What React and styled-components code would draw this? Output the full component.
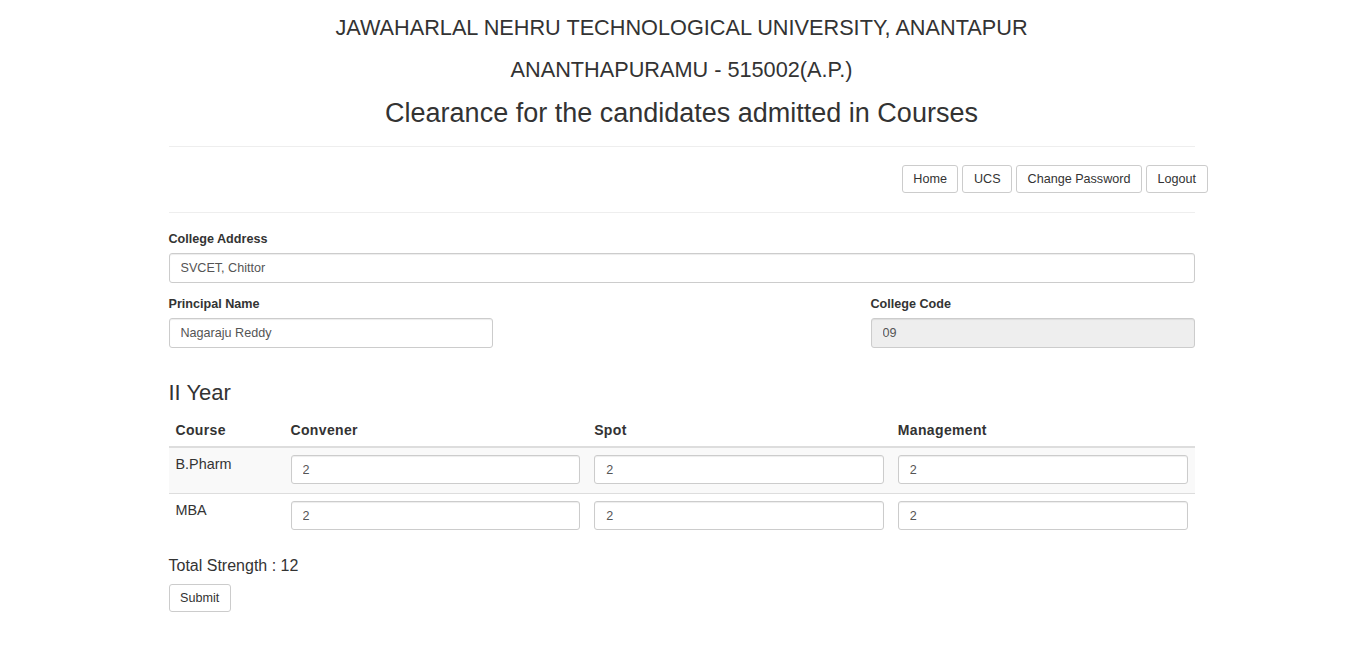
import styled, { createGlobalStyle } from 'styled-components'

const Global = createGlobalStyle`
  body {
    margin: 0;
    background: #fff;
    color: #333;
    font-family: "Liberation Sans", Arial, sans-serif;
    font-size: 12.6px;
  }
  * { box-sizing: border-box; }
`

const Page = styled.div`
  width: 1026px;
  margin: 0 auto;
  padding-top: 15px;
`

const Title = styled.h1`
  margin: ${(p) => p.$mt || 0}px 0 0;
  text-align: center;
  font-weight: 400;
  font-size: ${(p) => p.$size}px;
  line-height: ${(p) => p.$lh}px;
`

const Rule = styled.hr`
  margin: ${(p) => p.$mt}px 0 0;
  border: 0;
  border-top: 1px solid #eee;
`

const Nav = styled.div`
  display: flex;
  justify-content: flex-end;
  gap: 4px;
  margin: 18px -13px 0 0;
`

const Button = styled.button`
  height: 28px;
  padding: 0 10.5px;
  background: #fff;
  border: 1px solid #ccc;
  border-radius: 3px;
  color: #333;
  font-family: inherit;
  font-size: 12.6px;
  cursor: pointer;
`

const Field = styled.div`
  margin-top: ${(p) => p.$mt}px;
`

const Label = styled.label`
  display: block;
  font-weight: 700;
  font-size: 12.6px;
  line-height: 18px;
  margin-bottom: 5px;
`

const Input = styled.input`
  display: block;
  width: 100%;
  height: ${(p) => p.$h || 30}px;
  padding: 0 11px;
  border: 1px solid #ccc;
  border-radius: 3px;
  box-shadow: inset 0 1px 1px rgba(0, 0, 0, 0.075);
  background: ${(p) => (p.disabled ? '#eee' : '#fff')};
  color: #555;
  font-family: inherit;
  font-size: 12.6px;
`

const Row = styled.div`
  display: grid;
  grid-template-columns: 324px 1fr 324px;
  margin-top: 12px;
`

const Section = styled.h3`
  margin: 33px 0 0;
  font-weight: 400;
  font-size: 22px;
  line-height: 24px;
`

const Table = styled.table`
  width: 100%;
  margin-top: 9px;
  border-collapse: collapse;
  table-layout: fixed;
`

const Th = styled.th`
  width: ${(p) => p.$w || 'auto'};
  padding: 7px;
  text-align: left;
  font-size: 14px;
  letter-spacing: 0.35px;
  line-height: 18px;
  font-weight: 700;
  border-bottom: 2px solid #ddd;
`

const Tr = styled.tr`
  background: ${(p) => (p.$striped ? '#f9f9f9' : '#fff')};
`

const Td = styled.td`
  padding: 7px 7px 9px;
  vertical-align: top;
  font-size: 14.4px;
  line-height: 18px;
  border-top: 1px solid #ddd;
`

const Total = styled.div`
  margin-top: 17px;
  font-size: 16px;
  line-height: 20px;
`

const Footer = styled.div`
  margin-top: 8px;
`

const courses = ['B.Pharm', 'MBA']

export default function App() {
  return (
    <>
      <Global />
      <Page>
        <Title $size={21.7} $lh={26}>JAWAHARLAL NEHRU TECHNOLOGICAL UNIVERSITY, ANANTAPUR</Title>
        <Title $size={21.7} $lh={26} $mt={16}>ANANTHAPURAMU - 515002(A.P.)</Title>
        <Title $size={27} $lh={30} $mt={15}>Clearance for the candidates admitted in Courses</Title>
        <Rule $mt={18} />
        <Nav>
          <Button>Home</Button>
          <Button>UCS</Button>
          <Button>Change Password</Button>
          <Button>Logout</Button>
        </Nav>
        <Rule $mt={19} />
        <Field $mt={17}>
          <Label>College Address</Label>
          <Input defaultValue="SVCET, Chittor" />
        </Field>
        <Row>
          <div>
            <Label>Principal Name</Label>
            <Input defaultValue="Nagaraju Reddy" />
          </div>
          <div />
          <div>
            <Label>College Code</Label>
            <Input defaultValue="09" disabled />
          </div>
        </Row>
        <Section>II Year</Section>
        <Table>
          <thead>
            <tr>
              <Th $w="115px">Course</Th>
              <Th>Convener</Th>
              <Th>Spot</Th>
              <Th>Management</Th>
            </tr>
          </thead>
          <tbody>
            {courses.map((c, i) => (
              <Tr key={c} $striped={i % 2 === 0}>
                <Td>{c}</Td>
                <Td><Input $h={29} defaultValue="2" /></Td>
                <Td><Input $h={29} defaultValue="2" /></Td>
                <Td><Input $h={29} defaultValue="2" /></Td>
              </Tr>
            ))}
          </tbody>
        </Table>
        <Total>Total Strength : 12</Total>
        <Footer>
          <Button>Submit</Button>
        </Footer>
      </Page>
    </>
  )
}
